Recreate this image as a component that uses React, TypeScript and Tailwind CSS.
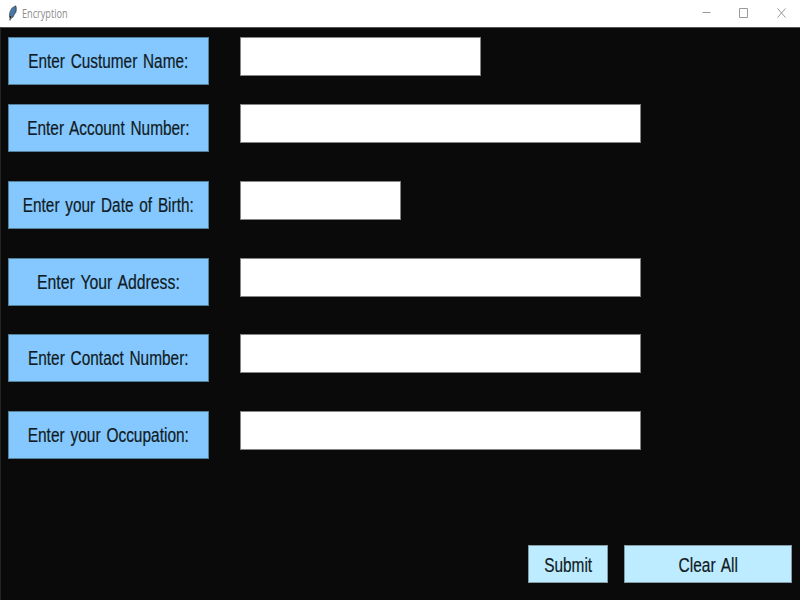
const fields = [
  { label: 'Enter Custumer Name:', scale: 'scale-x-[0.767]', width: 'w-[241px]', row: 'h-[67px]' },
  { label: 'Enter Account Number:', scale: 'scale-x-[0.77]', width: 'w-[401px]', row: 'h-[77px]' },
  { label: 'Enter your Date of Birth:', scale: 'scale-x-[0.768]', width: 'w-[161px]', row: 'h-[77px]' },
  { label: 'Enter Your Address:', scale: 'scale-x-[0.79]', width: 'w-[401px]', row: 'h-[76px]' },
  { label: 'Enter Contact Number:', scale: 'scale-x-[0.77]', width: 'w-[401px]', row: 'h-[77px]' },
  { label: 'Enter your Occupation:', scale: 'scale-x-[0.773]', width: 'w-[401px]', row: 'h-[49px]' },
];

function TitleBar() {
  return (
    <header className="flex h-[27px] shrink-0 items-center bg-white">
      <svg className="ml-[7px] h-[18px] w-3" viewBox="0 0 12 18">
        <path d="M2.2 12.5C1.2 9 2.8 5 5.4 2.2L8.8.2C9.9 3.6 9.4 8 7 11L4.2 13.6Z" fill="#5b6c7c" />
        <path d="M3.2 12C2.8 8 4.2 4.2 7.8 1.4C9 5.4 6.9 9.6 3.2 12Z" fill="#3f79b3" />
        <path d="M3.6 11L2.9 15.4" fill="none" stroke="#1f2830" strokeWidth="1.1" />
        <path d="M6.8 11L4.4 13.4M8.8 1C9.5 3.6 9.3 6 8.6 8" fill="none" stroke="#26323d" strokeWidth="0.7" />
      </svg>
      <span className="ml-[3px] origin-left scale-x-[0.76] font-['Open_Sans',sans-serif] text-[12px] leading-none whitespace-nowrap text-[#8c8c8c]">
        Encryption
      </span>
      <svg className="ml-auto h-[27px] w-[120px]" viewBox="0 0 120 27" fill="none" stroke="#999">
        <path d="M22.5 12.5H30.5" />
        <path d="M59.5 8.5H67.5V17.5H59.5Z" />
        <path d="M97.5 8.5L105.5 17.5M105.5 8.5L97.5 17.5" />
      </svg>
    </header>
  );
}

export default function App() {
  return (
    <div className="flex h-[600px] w-[800px] flex-col overflow-hidden bg-[#0b0a0b] font-['Liberation_Sans',Arial,sans-serif] text-[20px] leading-none text-[#101a22]">
      <TitleBar />
      <main className="flex flex-1 flex-col border-t border-l border-t-[#555] border-l-[#242424] pt-[9px] pr-2 pl-[7px]">
        {fields.map((f) => (
          <div key={f.label} className={`flex shrink-0 items-start ${f.row}`}>
            <label className="flex h-[48px] w-[201px] items-center justify-center border border-[#558099] bg-[#84c8ff] pr-px">
              <span className={`block whitespace-nowrap [-webkit-text-stroke:0.2px_#101a22] [word-spacing:2px] ${f.scale}`}>
                {f.label}
              </span>
            </label>
            <input
              aria-label={f.label}
              className={`ml-[31px] h-[39px] border border-[#858585] bg-white px-2 outline-none ${f.width}`}
            />
          </div>
        ))}
        <div className="mt-auto mb-[17px] flex justify-end gap-4">
          <button className="flex h-[38px] w-[80px] items-center justify-center border border-[#829da8] bg-[#bdebff] pt-px">
            <span className="block scale-x-[0.77] whitespace-nowrap [-webkit-text-stroke:0.2px_#101a22]">Submit</span>
          </button>
          <button className="flex h-[38px] w-[168px] items-center justify-center border border-[#829da8] bg-[#bdebff] pt-px">
            <span className="block scale-x-[0.775] whitespace-nowrap [-webkit-text-stroke:0.2px_#101a22] [word-spacing:2px]">
              Clear All
            </span>
          </button>
        </div>
      </main>
    </div>
  );
}
